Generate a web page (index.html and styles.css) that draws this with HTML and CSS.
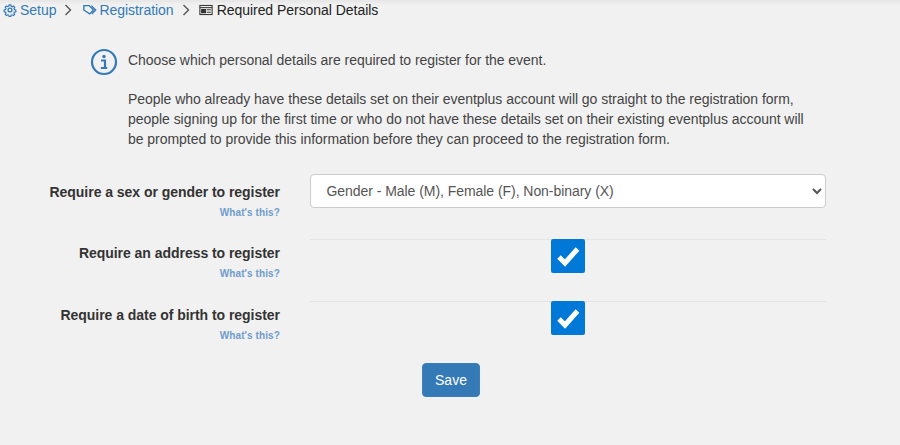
FILE: index.html
```html
<!DOCTYPE html>
<html lang="en">
<head>
<meta charset="utf-8">
<title>Required Personal Details</title>
<link rel="stylesheet" href="styles.css">
</head>
<body>
<nav class="crumbs">
  <svg class="ic" viewBox="0 0 16 16" fill="none" stroke="#337ab7" stroke-width="1.5"><circle cx="8" cy="8" r="2.2"/><path d="M6.900 1.500h2.200l.4 1.900 1.300.6 1.700-1 1.500 1.600-1 1.600.5 1.300 1.900.5v2.200l-1.900.4-.6 1.300 1 1.700-1.500 1.500-1.700-1-1.300.5-.4 1.900H6.900l-.4-1.900-1.300-.5-1.700 1-1.500-1.500 1-1.700-.6-1.300-1.900-.4V7.800l1.900-.5.5-1.300-1-1.600 1.500-1.600 1.700 1 1.300-.6z" transform="translate(.8 .8) scale(.9)"/></svg>
  <a class="crumb" href="#">Setup</a>
  <svg class="chev" viewBox="0 0 8 12" fill="none" stroke="#555" stroke-width="1.4"><path d="M1.500 1l5 5-5 5"/></svg>
  <svg class="ic tag" viewBox="0 0 16 16" fill="none" stroke="#337ab7" stroke-width="1.600"><path d="M1 3h6l5 5-4.500 4.500L1 8z"/><path d="M9.500 3l5 5-4.500 4.500"/></svg>
  <a class="crumb" href="#">Registration</a>
  <svg class="chev" viewBox="0 0 8 12" fill="none" stroke="#555" stroke-width="1.4"><path d="M1.500 1l5 5-5 5"/></svg>
  <svg class="ic card" viewBox="0 0 16 14" fill="none" stroke="#333" stroke-width="1.200"><rect x="1" y="1.800" width="14" height="10.400"/><path d="M1 4.300h14"/><path d="M3 6.500h4.500v3.500H3z" fill="#333"/><path d="M9 6.800h4.500M9 9.500h4.500"/></svg>
  <span class="current">Required Personal Details</span>
</nav>

<main class="page">
  <section class="intro">
    <svg class="info" viewBox="0 0 28 28" fill="none"><circle cx="14" cy="14" r="12" stroke="#337ab7" stroke-width="2.200"/><circle cx="14" cy="8.500" r="1.700" fill="#337ab7"/><path d="M11 12.500h4v7M10.800 20h6.400" stroke="#337ab7" stroke-width="2.200"/></svg>
    <div class="intro-text">
      <p>Choose which personal details are required to register for the event.</p>
      <p>People who already have these details set on their eventplus account will go straight to the registration form, people signing up for the first time or who do not have these details set on their existing eventplus account will be prompted to provide this information before they can proceed to the registration form.</p>
    </div>
  </section>

  <form class="form">
    <div class="row first">
      <div class="label"><label>Require a sex or gender to register</label><a href="#">What's this?</a></div>
      <div class="control">
        <select class="select"><option>Gender - Male (M), Female (F), Non-binary (X)</option></select>
      </div>
    </div>
    <div class="row">
      <div class="label"><label>Require an address to register</label><a href="#">What's this?</a></div>
      <div class="control ruled">
        <span class="check"><svg viewBox="0 0 34 34"><path d="M8 18l6 6L26.500 10" fill="none" stroke="#fff" stroke-width="5"/></svg></span>
      </div>
    </div>
    <div class="row">
      <div class="label"><label>Require a date of birth to register</label><a href="#">What's this?</a></div>
      <div class="control ruled">
        <span class="check"><svg viewBox="0 0 34 34"><path d="M8 18l6 6L26.500 10" fill="none" stroke="#fff" stroke-width="5"/></svg></span>
      </div>
    </div>
    <div class="actions"><button type="button" class="save">Save</button></div>
  </form>
</main>
</body>
</html>
```
FILE: styles.css
```css
* { box-sizing: border-box; }
html, body { margin: 0; padding: 0; }
body {
  width: 900px;
  height: 445px;
  overflow: hidden;
  background: linear-gradient(#e6e6e6, #f1f1f1 5px);
  font-family: "Liberation Sans", Arial, sans-serif;
  font-size: 14px;
  color: #333;
  letter-spacing: -0.04px;
}
.crumbs {
  display: flex;
  align-items: center;
  height: 20px;
  padding-left: 3px;
  font-size: 14px;
}
.ic { width: 14px; height: 14px; flex: none; }
.crumb { color: #337ab7; text-decoration: none; margin-left: 3px; }
.chev { width: 8px; height: 12px; margin: 0 11px 0 8px; flex: none; }
.tag { width: 16px; margin-left: -1px; }
.tag + .crumb { margin-left: 1px; }
.card { margin-left: -2px; margin-right: 4px; }
.current { color: #222; }
.page { padding: 0; }
.intro {
  display: flex;
  margin: 28px 0 0 90px;
  width: 726px;
  color: #444;
  line-height: 20px;
}
.info { width: 28px; height: 28px; flex: none; margin-right: 10px; }
.intro-text p { margin: 0 0 19px; padding-top: 2px; }
.intro-text p + p { padding-top: 0; margin-bottom: 25px; }
.form { margin-top: 0; }
.row { display: flex; height: 62px; }
.row.first { height: 65px; }
.label {
  width: 280px;
  display: flex;
  flex-direction: column;
  align-items: flex-end;
  padding-top: 4px;
}
.row.first .label { padding-top: 8px; }
.label label { font-weight: 700; font-size: 14px; line-height: 20px; color: #333; }
.label a { font-size: 10px; font-weight: 700; color: #6f9ccb; text-decoration: none; line-height: 14px; margin-top: 4px; letter-spacing: 0.1px; }
.control { width: 516px; margin-left: 29.5px; }
.select {
  display: block;
  width: 516px;
  height: 34px;
  padding: 0 12px;
  background: #fff;
  border: 1px solid #ccc;
  border-radius: 4px;
  font-family: inherit;
  font-size: 14px;
  letter-spacing: -0.05px;
  color: #555;
}
.ruled { border-top: 1px solid #e4e4e4; padding-left: 241px; }
.check {
  display: block;
  width: 34px;
  height: 34px;
  margin-top: -1px;
  background: #0078d7;
  border-radius: 2px;
}
.check svg { display: block; width: 34px; height: 34px; }
.actions { padding-left: 422px; }
.save {
  width: 58px;
  height: 34px;
  background: #337ab7;
  border: 1px solid #3b7fba;
  border-radius: 4px;
  color: #fff;
  font-family: inherit;
  font-size: 14px;
  padding: 0;
}
```
